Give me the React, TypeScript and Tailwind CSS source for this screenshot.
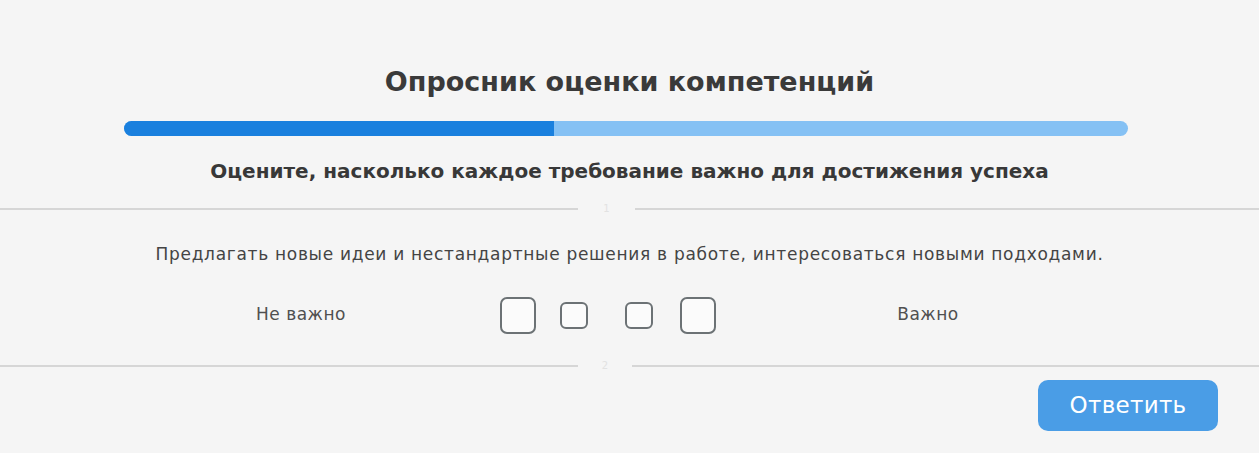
import React from 'react';

const font = { fontFamily: '"DejaVu Sans", "Noto Sans", sans-serif' };

function Divider({ label, left, gap }: { label: string; left: string; gap: string }) {
  return (
    <div className="flex h-[18px] w-full items-center">
      <div className={`h-[2px] bg-[#d6d6d6] ${left}`} />
      <div className={`text-center text-[10px] leading-none text-[#e2e2e2] ${gap}`}>{label}</div>
      <div className="h-[2px] flex-1 bg-[#d6d6d6]" />
    </div>
  );
}

function Box({ big }: { big?: boolean }) {
  return (
    <div
      className={
        big
          ? 'h-[37px] w-[36px] rounded-[7px] border-2 border-[#6c7275] bg-[#fbfbfb]'
          : 'h-[27px] w-[28px] rounded-[6px] border-2 border-[#6c7275] bg-[#fbfbfb]'
      }
    />
  );
}

export default function App() {
  return (
    <div className="flex min-h-screen w-full flex-col bg-[#f5f5f5]" style={font}>
      <div className="mt-[62px] flex h-[40px] items-center justify-center text-[27px] font-semibold text-[#3a3a3a]">
        Опросник оценки компетенций
      </div>

      <div className="ml-[124px] mt-[19px] flex h-[15px] w-[1004px] overflow-hidden rounded-full bg-[#85c1f4]">
        <div className="h-full w-[430px] bg-[#1a80de]" />
      </div>

      <div className="mt-[20px] flex h-[30px] items-center justify-center text-[20px] font-semibold text-[#383838]">
        Оцените, насколько каждое требование важно для достижения успеха
      </div>

      <div className="mt-[14px]">
        <Divider label="1" left="w-[578px]" gap="w-[57px]" />
      </div>

      <div className="mt-[24px] flex h-[26px] items-center justify-center text-[17px] tracking-[0.7px] text-[#444444]">
        Предлагать новые идеи и нестандартные решения в работе, интересоваться новыми подходами.
      </div>

      <div className="mt-[27px] flex h-[40px] items-center">
        <div className="ml-[200px] w-[202px] text-center text-[17px] tracking-[0.5px] text-[#505050]">Не важно</div>
        <div className="ml-[98px] flex items-center">
          <Box big />
          <div className="ml-[24px]">
            <Box />
          </div>
          <div className="ml-[37px]">
            <Box />
          </div>
          <div className="ml-[27px]">
            <Box big />
          </div>
        </div>
        <div className="ml-[162px] w-[100px] text-center text-[17px] tracking-[0.5px] text-[#505050]">Важно</div>
      </div>

      <div className="mt-[22px]">
        <Divider label="2" left="w-[578px]" gap="w-[54px]" />
      </div>

      <div className="mt-[5px] flex justify-end pr-[41px]">
        <button className="flex h-[51px] w-[180px] items-center justify-center rounded-[10px] bg-[#4a9de6] text-[23px] tracking-[0.3px] text-white">
          Ответить
        </button>
      </div>
    </div>
  );
}
